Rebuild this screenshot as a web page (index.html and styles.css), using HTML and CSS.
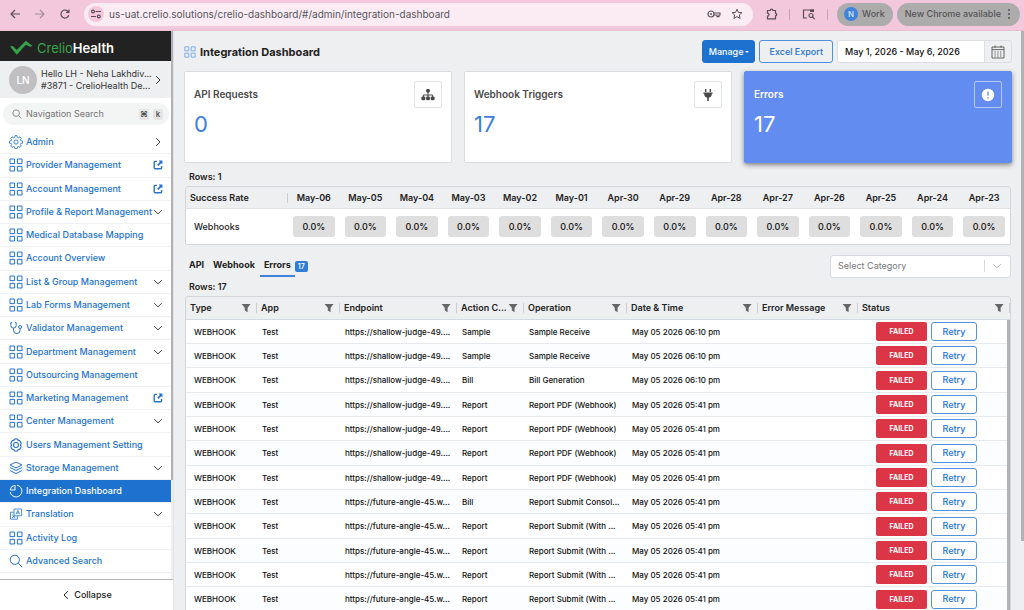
FILE: index.html
```html
<!DOCTYPE html>
<html lang="en">
<head>
<meta charset="utf-8">
<meta name="viewport" content="width=device-width, initial-scale=1">
<title>Integration Dashboard</title>
<link rel="stylesheet" href="styles.css">
</head>
<body>
<svg class="sprite" aria-hidden="true">
  <symbol id="i-grid" viewBox="0 0 14 14"><path d="M1 1h4.6v4.6H1zM8.4 1H13v4.6H8.4zM1 8.4h4.6V13H1zM8.4 8.4H13V13H8.4z" fill="none" stroke="currentColor"/></symbol>
  <symbol id="i-right" viewBox="0 0 10 10"><path d="M3.2 1.2 7 5 3.2 8.8" fill="none" stroke="currentColor"/></symbol>
  <symbol id="i-left" viewBox="0 0 10 10"><path d="M6.8 1.2 3 5l3.8 3.8" fill="none" stroke="currentColor"/></symbol>
  <symbol id="i-down" viewBox="0 0 10 10"><path d="M1.2 3.2 5 6.8l3.8-3.6" fill="none" stroke="currentColor"/></symbol>
  <symbol id="i-open" viewBox="0 0 10 10"><path d="M4 1.4H2.2a1 1 0 0 0-1 1v5.4a1 1 0 0 0 1 1h5.4a1 1 0 0 0 1-1V6" fill="none" stroke="currentColor" stroke-width="1.4"/><path d="M5.6.6h3.8v3.8L8.200 3.200 5.400 6 4.200 4.800 6.900 2z" fill="currentColor"/></symbol>
  <symbol id="i-gear" viewBox="0 0 24 24"><path d="M10.300 1.500h3.400l.6 2.900 1.900.8 2.500-1.600 2.400 2.400-1.600 2.500.8 1.900 2.900.6v3.400l-2.900.6-.8 1.900 1.600 2.500-2.400 2.400-2.500-1.600-1.900.8-.6 2.900h-3.400l-.6-2.900-1.900-.8-2.500 1.600-2.400-2.400 1.600-2.500-.8-1.900-2.900-.6V11l2.900-.6.8-1.900L2.900 6l2.400-2.400 2.500 1.600 1.900-.8z" transform="translate(0 -.4)" fill="none" stroke="currentColor" stroke-width="1.500" stroke-linejoin="round"/><circle cx="12" cy="12" r="3.600" fill="none" stroke="currentColor" stroke-width="1.500"/></symbol>
  <symbol id="i-cog" viewBox="0 0 24 24"><path d="M9 2.200q3-1.400 6 0l.7 2 2.100.2q2.700 1.900 3 5.200L19.600 12l1.200 2.400q-.3 3.300-3 5.200l-2.100.2-.7 2q-3 1.400-6 0l-.7-2-2.100-.2q-2.700-1.900-3-5.200L4.400 12 3.200 9.600q.3-3.300 3-5.200l2.100-.2z" fill="none" stroke="currentColor" stroke-width="1.900" stroke-linejoin="round"/><circle cx="12" cy="12" r="4.200" fill="none" stroke="currentColor" stroke-width="1.900"/></symbol>
  <symbol id="i-steth" viewBox="0 0 14 14"><path d="M3.200 1.600H1.800v2.800a2.700 2.700 0 0 0 5.400 0V1.600H5.800M4.500 7.200v2.100a3.300 3.300 0 0 0 6.600 0V7.600" fill="none" stroke="currentColor"/><circle cx="11.100" cy="6" r="1.500" fill="none" stroke="currentColor"/></symbol>
  <symbol id="i-layers" viewBox="0 0 14 14"><path d="M7 1 13 4 7 7 1 4zM1 6.500l6 3 6-3M1 9.500l6 3 6-3" fill="none" stroke="currentColor" stroke-linejoin="round"/></symbol>
  <symbol id="i-pie" viewBox="0 0 14 14"><path d="M8 1.200A5.900 5.900 0 1 1 1.200 8M6 1.200A5.500 5.500 0 0 0 1.200 6H6z" fill="none" stroke="currentColor"/></symbol>
  <symbol id="i-translate" viewBox="0 0 14 14"><path d="M5 8.600V2h7.600v6.800H5zM4.800 5.200H1.500v7h7V9M7 7.200l1.800-3.800 1.800 3.800M7.700 6h2.200M3 8h1.500M3 10.800l3-2M4 9l2.200 2" fill="none" stroke="currentColor" stroke-width=".8"/></symbol>
  <symbol id="i-search" viewBox="0 0 14 14"><circle cx="5.800" cy="5.800" r="4.600" fill="none" stroke="currentColor"/><path d="m9.200 9.200 4 4" stroke="currentColor"/></symbol>
  <symbol id="i-filter" viewBox="0 0 10 10"><path d="M.6 1h9L6.600 4.800V9.200L3.800 7.500V4.800z" fill="currentColor"/></symbol>
</svg>

<header class="browser">
  <button class="bare" aria-label="Back"><svg class="ic12" viewBox="0 0 12 12"><path d="M11 6H2M6 2 2 6l4 4" fill="none" stroke="currentColor" stroke-width="1.200"/></svg></button>
  <button class="bare faded" aria-label="Forward"><svg class="ic12" viewBox="0 0 12 12"><path d="M1 6h9M6 2l4 4-4 4" fill="none" stroke="currentColor" stroke-width="1.200"/></svg></button>
  <button class="bare" aria-label="Reload"><svg class="ic12" viewBox="0 0 12 12"><path d="M9.800 7.200A4 4 0 1 1 9.300 3.800M10 1.500v3H7" fill="none" stroke="currentColor" stroke-width="1.200"/></svg></button>
  <div class="address">
    <button class="site" aria-label="Site information"><svg class="ic12" viewBox="0 0 12 12"><path d="M5.500 3.500H11M1 8.500h5" stroke="currentColor" stroke-width="1.200"/><circle cx="3" cy="3.500" r="1.400" fill="none" stroke="currentColor" stroke-width="1.200"/><circle cx="8.800" cy="8.500" r="1.400" fill="none" stroke="currentColor" stroke-width="1.200"/></svg></button>
    <input class="url" type="text" aria-label="Address" value="us-uat.crelio.solutions/crelio-dashboard/#/admin/integration-dashboard">
    <button class="bare" aria-label="Passwords"><svg class="key" viewBox="0 0 14 10"><circle cx="4" cy="5" r="3" fill="none" stroke="currentColor" stroke-width="1.200"/><circle cx="4" cy="5" r="1" fill="currentColor"/><path d="M6.800 4H13v2h-1v1.600h-2V6H6.800" fill="none" stroke="currentColor" stroke-width="1.100"/></svg></button>
    <button class="bare" aria-label="Bookmark"><svg class="ic12" viewBox="0 0 12 12"><path d="m6 1.200 1.400 3.200 3.500.3-2.600 2.300.8 3.400L6 8.600l-3.100 1.800.8-3.400L1.100 4.700l3.500-.3z" fill="none" stroke="currentColor"/></svg></button>
  </div>
  <button class="bare ext" aria-label="Extensions"><svg class="ic12" viewBox="0 0 12 12"><path d="M1.500 2.500h2.800a1.300 1.300 0 0 1 2.600 0h2.600v2.800a1.300 1.300 0 0 1 0 2.600v3h-8V8.200a1.500 1.500 0 0 0 0-3z" fill="none" stroke="currentColor" stroke-width="1.200"/></svg></button>
  <span class="tick"></span>
  <button class="bare lens" aria-label="Side search"><svg class="key" viewBox="0 0 14 12"><path d="M5 10H1.500V2h10v2" fill="none" stroke="currentColor" stroke-width="1.200"/><path d="M8 1.500h4V4H8z" fill="currentColor"/><circle cx="9" cy="7.500" r="2" fill="none" stroke="currentColor" stroke-width="1.200"/><path d="m10.500 9 2.200 2.200" stroke="currentColor" stroke-width="1.200"/></svg></button>
  <span class="tick"></span>
  <button class="profile"><span class="initial">N</span>Work</button>
  <button class="update">New Chrome available<svg class="dots" viewBox="0 0 4 12"><circle cx="2" cy="2" r="1" fill="currentColor"/><circle cx="2" cy="6" r="1" fill="currentColor"/><circle cx="2" cy="10" r="1" fill="currentColor"/></svg></button>
</header>

<div class="app">
  <aside class="sidebar">
    <div class="side-body">
      <div class="side-main">
        <div class="brand"><svg class="mark" viewBox="0 0 24 16"><path d="M0 6.500 3 6l4 4L16.500.5 23.500 6l-2.500.8-4.500-2.300L7 15z" fill="#35a24a"/></svg><span class="wordmark">Crelio<b>Health</b></span></div>
        <button class="user"><span class="avatar">LN</span><span class="who"><span class="line">Hello LH - Neha Lakhdiv...</span><span class="line">#3871 - CrelioHealth De...</span></span><svg class="ic10"><use href="#i-right"/></svg></button>
        <label class="navsearch"><svg class="ic10"><use href="#i-search"/></svg><input type="search" placeholder="Navigation Search" aria-label="Navigation Search"><kbd>⌘</kbd><kbd>k</kbd></label>
        <nav class="menu">
          <a href="#"><svg class="ic14"><use href="#i-gear"/></svg><span>Admin</span><svg class="ic10 arrow"><use href="#i-right"/></svg></a>
          <a href="#"><svg class="ic14"><use href="#i-grid"/></svg><span>Provider Management</span><svg class="ic10"><use href="#i-open"/></svg></a>
          <a href="#"><svg class="ic14"><use href="#i-grid"/></svg><span>Account Management</span><svg class="ic10"><use href="#i-open"/></svg></a>
          <a href="#"><svg class="ic14"><use href="#i-grid"/></svg><span>Profile &amp; Report Management</span><svg class="ic10 arrow"><use href="#i-down"/></svg></a>
          <a href="#"><svg class="ic14"><use href="#i-grid"/></svg><span>Medical Database Mapping</span></a>
          <a href="#"><svg class="ic14"><use href="#i-grid"/></svg><span>Account Overview</span></a>
          <a href="#"><svg class="ic14"><use href="#i-grid"/></svg><span>List &amp; Group Management</span><svg class="ic10 arrow"><use href="#i-down"/></svg></a>
          <a href="#"><svg class="ic14"><use href="#i-grid"/></svg><span>Lab Forms Management</span><svg class="ic10 arrow"><use href="#i-down"/></svg></a>
          <a href="#"><svg class="ic14"><use href="#i-steth"/></svg><span>Validator Management</span><svg class="ic10 arrow"><use href="#i-down"/></svg></a>
          <a href="#"><svg class="ic14"><use href="#i-grid"/></svg><span>Department Management</span><svg class="ic10 arrow"><use href="#i-down"/></svg></a>
          <a href="#"><svg class="ic14"><use href="#i-grid"/></svg><span>Outsourcing Management</span></a>
          <a href="#"><svg class="ic14"><use href="#i-grid"/></svg><span>Marketing Management</span><svg class="ic10"><use href="#i-open"/></svg></a>
          <a href="#"><svg class="ic14"><use href="#i-grid"/></svg><span>Center Management</span><svg class="ic10 arrow"><use href="#i-down"/></svg></a>
          <a href="#"><svg class="ic14"><use href="#i-cog"/></svg><span>Users Management Setting</span></a>
          <a href="#"><svg class="ic14"><use href="#i-layers"/></svg><span>Storage Management</span><svg class="ic10 arrow"><use href="#i-down"/></svg></a>
          <a href="#" class="active" aria-current="page"><svg class="ic14"><use href="#i-pie"/></svg><span>Integration Dashboard</span></a>
          <a href="#"><svg class="ic14"><use href="#i-translate"/></svg><span>Translation</span><svg class="ic10 arrow"><use href="#i-down"/></svg></a>
          <a href="#"><svg class="ic14"><use href="#i-grid"/></svg><span>Activity Log</span></a>
          <a href="#"><svg class="ic14"><use href="#i-search"/></svg><span>Advanced Search</span></a>
        </nav>
      </div>
      <div class="track side-track"><div class="thumb"></div></div>
    </div>
    <button class="collapse"><svg class="ic10"><use href="#i-left"/></svg>Collapse</button>
  </aside>

  <main class="content">
    <div class="titlebar">
      <svg class="ic12 title-icon"><use href="#i-grid"/></svg>
      <h1>Integration Dashboard</h1>
      <button class="btn primary">Manage<span class="caret"></span></button>
      <button class="btn outline">Excel Export</button>
      <div class="daterange">
        <input type="text" aria-label="Date range" value="May 1, 2026 - May 6, 2026">
        <button aria-label="Open calendar"><svg class="ic14" viewBox="0 0 14 14"><path d="M1 2h12v11H1zM1 4.600h12M4 .5v2.300M10 .5v2.300" fill="none" stroke="currentColor" stroke-width=".9"/><path d="M3.500 7h7M3.500 9h7M3.500 11h7" stroke="currentColor" stroke-dasharray="1.200 1.600"/></svg></button>
      </div>
    </div>

    <section class="cards">
      <article class="card"><div><h2>API Requests</h2><p>0</p></div><span class="badge-icon"><svg class="ic14" viewBox="0 0 14 14"><path d="M2.300 9V7h9.400v2M7 4v5" fill="none" stroke="currentColor"/><circle cx="7" cy="2.800" r="2" fill="currentColor"/><rect x=".4" y="8.400" width="3.900" height="3.900" rx="1.200" fill="currentColor"/><rect x="5.050" y="8.400" width="3.900" height="3.900" rx="1.200" fill="currentColor"/><rect x="9.700" y="8.400" width="3.900" height="3.900" rx="1.200" fill="currentColor"/></svg></span></article>
      <article class="card"><div><h2>Webhook Triggers</h2><p>17</p></div><span class="badge-icon"><svg class="ic14" viewBox="0 0 14 14"><path d="M4 1h1.400v3H4zM8.600 1H10v3H8.600zM2.400 4.500h9.200v1.300h-.8c0 2.200-1 3.600-3 4V13H6.200V9.800c-2-.4-3-1.800-3-4h-.8z" fill="currentColor"/></svg></span></article>
      <article class="card selected"><div><h2>Errors</h2><p>17</p></div><span class="badge-icon"><svg class="ic14" viewBox="0 0 14 14"><circle cx="7" cy="7" r="6.200" fill="currentColor"/><path d="M7 3.600v4.200M7 9v1.400" stroke="#628cef" stroke-width="1.300"/></svg></span></article>
    </section>

    <p class="rows">Rows: 1</p>
    <div class="frame">
      <table class="rates">
        <thead><tr><th scope="col">Success Rate</th><th scope="col">May-06</th><th scope="col">May-05</th><th scope="col">May-04</th><th scope="col">May-03</th><th scope="col">May-02</th><th scope="col">May-01</th><th scope="col">Apr-30</th><th scope="col">Apr-29</th><th scope="col">Apr-28</th><th scope="col">Apr-27</th><th scope="col">Apr-26</th><th scope="col">Apr-25</th><th scope="col">Apr-24</th><th scope="col">Apr-23</th></tr></thead>
        <tbody><tr><td>Webhooks</td><td><span>0.0%</span></td><td><span>0.0%</span></td><td><span>0.0%</span></td><td><span>0.0%</span></td><td><span>0.0%</span></td><td><span>0.0%</span></td><td><span>0.0%</span></td><td><span>0.0%</span></td><td><span>0.0%</span></td><td><span>0.0%</span></td><td><span>0.0%</span></td><td><span>0.0%</span></td><td><span>0.0%</span></td><td><span>0.0%</span></td></tr></tbody>
      </table>
    </div>

    <div class="tabbar">
      <div class="tabs" role="tablist">
        <button role="tab" aria-selected="false">API</button>
        <button role="tab" aria-selected="false">Webhook</button>
        <button role="tab" aria-selected="true">Errors</button>
      </div>
      <span class="count">17</span>
      <div class="category">
        <select aria-label="Select Category"><option>Select Category</option></select>
        <svg class="ic10"><use href="#i-down"/></svg>
      </div>
    </div>

    <p class="rows second">Rows: 17</p>
    <div class="frame log-frame">
      <table class="log">
        <colgroup><col class="c-type"><col class="c-app"><col class="c-end"><col class="c-act"><col class="c-op"><col class="c-date"><col class="c-err"><col class="c-stat"></colgroup>
        <thead><tr>
          <th scope="col"><div><span>Type</span><svg class="ic10"><use href="#i-filter"/></svg></div></th>
          <th scope="col"><div><span>App</span><svg class="ic10"><use href="#i-filter"/></svg></div></th>
          <th scope="col"><div><span>Endpoint</span><svg class="ic10"><use href="#i-filter"/></svg></div></th>
          <th scope="col"><div><span>Action C...</span><svg class="ic10"><use href="#i-filter"/></svg></div></th>
          <th scope="col"><div><span>Operation</span><svg class="ic10"><use href="#i-filter"/></svg></div></th>
          <th scope="col"><div><span>Date &amp; Time</span><svg class="ic10"><use href="#i-filter"/></svg></div></th>
          <th scope="col"><div><span>Error Message</span><svg class="ic10"><use href="#i-filter"/></svg></div></th>
          <th scope="col"><div><span>Status</span><svg class="ic10"><use href="#i-filter"/></svg></div></th>
        </tr></thead>
        <tbody>
          <tr><td>WEBHOOK</td><td>Test</td><td>https://shallow-judge-49....</td><td>Sample</td><td>Sample Receive</td><td>May 05 2026 06:10 pm</td><td></td><td><div class="state"><span class="failed">FAILED</span><button class="retry">Retry</button></div></td></tr>
          <tr><td>WEBHOOK</td><td>Test</td><td>https://shallow-judge-49....</td><td>Sample</td><td>Sample Receive</td><td>May 05 2026 06:10 pm</td><td></td><td><div class="state"><span class="failed">FAILED</span><button class="retry">Retry</button></div></td></tr>
          <tr><td>WEBHOOK</td><td>Test</td><td>https://shallow-judge-49....</td><td>Bill</td><td>Bill Generation</td><td>May 05 2026 06:10 pm</td><td></td><td><div class="state"><span class="failed">FAILED</span><button class="retry">Retry</button></div></td></tr>
          <tr><td>WEBHOOK</td><td>Test</td><td>https://shallow-judge-49....</td><td>Report</td><td>Report PDF (Webhook)</td><td>May 05 2026 05:41 pm</td><td></td><td><div class="state"><span class="failed">FAILED</span><button class="retry">Retry</button></div></td></tr>
          <tr><td>WEBHOOK</td><td>Test</td><td>https://shallow-judge-49....</td><td>Report</td><td>Report PDF (Webhook)</td><td>May 05 2026 05:41 pm</td><td></td><td><div class="state"><span class="failed">FAILED</span><button class="retry">Retry</button></div></td></tr>
          <tr><td>WEBHOOK</td><td>Test</td><td>https://shallow-judge-49....</td><td>Report</td><td>Report PDF (Webhook)</td><td>May 05 2026 05:41 pm</td><td></td><td><div class="state"><span class="failed">FAILED</span><button class="retry">Retry</button></div></td></tr>
          <tr><td>WEBHOOK</td><td>Test</td><td>https://shallow-judge-49....</td><td>Report</td><td>Report PDF (Webhook)</td><td>May 05 2026 05:41 pm</td><td></td><td><div class="state"><span class="failed">FAILED</span><button class="retry">Retry</button></div></td></tr>
          <tr><td>WEBHOOK</td><td>Test</td><td>https://future-angle-45.w...</td><td>Bill</td><td>Report Submit Consol...</td><td>May 05 2026 05:41 pm</td><td></td><td><div class="state"><span class="failed">FAILED</span><button class="retry">Retry</button></div></td></tr>
          <tr><td>WEBHOOK</td><td>Test</td><td>https://future-angle-45.w...</td><td>Report</td><td>Report Submit (With ...</td><td>May 05 2026 05:41 pm</td><td></td><td><div class="state"><span class="failed">FAILED</span><button class="retry">Retry</button></div></td></tr>
          <tr><td>WEBHOOK</td><td>Test</td><td>https://future-angle-45.w...</td><td>Report</td><td>Report Submit (With ...</td><td>May 05 2026 05:41 pm</td><td></td><td><div class="state"><span class="failed">FAILED</span><button class="retry">Retry</button></div></td></tr>
          <tr><td>WEBHOOK</td><td>Test</td><td>https://future-angle-45.w...</td><td>Report</td><td>Report Submit (With ...</td><td>May 05 2026 05:41 pm</td><td></td><td><div class="state"><span class="failed">FAILED</span><button class="retry">Retry</button></div></td></tr>
          <tr><td>WEBHOOK</td><td>Test</td><td>https://future-angle-45.w...</td><td>Report</td><td>Report Submit (With ...</td><td>May 05 2026 05:41 pm</td><td></td><td><div class="state"><span class="failed">FAILED</span><button class="retry">Retry</button></div></td></tr>
        </tbody>
      </table>
      <div class="track log-track"><div class="thumb"></div></div>
    </div>
  </main>
  <div class="track page-track"><div class="thumb"></div></div>
</div>
</body>
</html>
```
FILE: styles.css
```css
* { box-sizing: border-box; }
body {
  margin: 0; height: 100vh; overflow: hidden; display: flex; flex-direction: column;
  font: 500 9px/12px Inter, "Liberation Sans", sans-serif; color: #222; background: #eeeff1;
}
button, input, select { font: inherit; color: inherit; margin: 0; padding: 0; border: 0; background: none; min-width: 0; }
h1, h2, p { margin: 0; }
svg { display: block; flex: none; }
.sprite { position: absolute; width: 0; height: 0; }
.ic10 { width: 10px; height: 10px; }
.ic12 { width: 12px; height: 12px; }
.ic14 { width: 14px; height: 14px; }

/* Browser toolbar */
.browser { flex: none; height: 31px; display: flex; align-items: center; padding: 0 4px 2px 9px; background: #f4c8dc; color: #5a4f56; border-bottom: 1px solid #e6bfd0; }
.bare { display: flex; margin-right: 13px; }
.faded { opacity: .5; }
.address { flex: 1; height: 23px; display: flex; align-items: center; border-radius: 12px; background: #fbecf4; padding: 0 10px 0 4px; }
.site { width: 16px; height: 16px; border-radius: 8px; background: #f4c8dc; display: flex; align-items: center; justify-content: center; }
.url { flex: 1; padding-left: 5px; font-size: 10px; font-weight: 400; color: #55555a; }
.key { width: 14px; height: 12px; }
.address .bare { margin: 0 0 0 10px; }
.bare.ext { margin: 0 11px 0 13px; }
.bare.lens { margin: 0 11px 0 12px; }
.tick { width: 1px; height: 11px; background: #c9a2b5; }
.profile, .update { height: 23px; border-radius: 12px; background: #adacad; color: #555; display: flex; align-items: center; font-size: 9px; }
.profile { margin: 0 4px 0 9px; padding: 0 8px 0 7px; gap: 4px; }
.initial { width: 14px; height: 14px; line-height: 14px; border-radius: 7px; background: #3f83dc; color: #dbe8fa; font-size: 8px; text-align: center; }
.update { padding: 0 9px 0 8px; gap: 6px; }
.dots { width: 4px; height: 12px; }

/* Shell */
.app { flex: 1; min-height: 0; display: grid; grid-template-columns: 174px minmax(0, 1fr) 3px; }
.track { background: #eeeff1; }
.thumb { background: #b2b2b4; }
.page-track .thumb { height: 88%; }

/* Sidebar */
.sidebar { display: flex; flex-direction: column; background: #fff; min-height: 0; border-right: 1px solid #e2e2e4; }
.side-body { flex: 1; min-height: 0; display: flex; }
.side-main { flex: 1; min-width: 0; display: flex; flex-direction: column; padding-bottom: 6px; }
.side-track { width: 2px; }
.side-track .thumb { height: 82%; }
.brand { height: 30px; flex: none; background: #222; display: flex; align-items: center; gap: 4px; padding: 3px 0 0 10px; }
.mark { width: 23px; height: 16px; }
.wordmark { font-size: 13px; line-height: 18px; font-weight: 400; color: #3aa54d; }
.wordmark b { font-weight: 600; color: #fff; }
.user { flex: none; height: 37px; display: flex; align-items: center; padding: 0 8px 0 9px; background: #eeeff1; text-align: left; color: #333; }
.avatar { width: 28px; height: 28px; line-height: 28px; border-radius: 14px; background: #c0c0c2; color: #fff; text-align: center; font-size: 10px; }
.who { flex: 1; min-width: 0; padding-left: 4px; }
.line { display: block; white-space: nowrap; font-weight: 400; }
.navsearch { flex: none; height: 22px; margin: 5px 2px 6px 3px; padding: 0 6px 0 9px; border-radius: 12px; background: #f3f4f4; display: flex; align-items: center; color: #666; }
.navsearch input { flex: 1; padding-left: 4px; font-weight: 400; outline: 0; }
.navsearch input::placeholder { color: #757575; opacity: 1; }
.navsearch kbd { width: 10px; height: 11px; margin-left: 4px; border-radius: 2px; background: #e5e5e6; font: 500 8px/11px Inter, "DejaVu Sans", sans-serif; text-align: center; color: #444; }
.menu { flex: 1; display: flex; flex-direction: column; }
.menu a { flex: 1; display: flex; align-items: center; gap: 3px; padding: 0 8px 0 9px; border-bottom: 1px solid #f0f1f2; color: #2472cf; text-decoration: none; white-space: nowrap; }
.menu span { flex: 1; min-width: 0; }
.menu .arrow { color: #444; }
.menu .active { background: #1d72d0; color: #fff; }
.collapse { flex: none; height: 31px; border-top: 1px solid #b5b5b7; display: flex; align-items: center; justify-content: center; gap: 3px; color: #222; }

/* Content */
.content { min-width: 0; min-height: 0; display: flex; flex-direction: column; padding: 9px 9px 0 10px; }
.titlebar { flex: none; height: 23px; display: flex; align-items: center; margin-bottom: 8px; }
.title-icon { color: #6fa3e8; }
h1 { flex: 1; padding-left: 4px; font-size: 11px; line-height: 16px; font-weight: 700; }
.btn { height: 23px; border-radius: 3px; display: flex; align-items: center; border: 1px solid #1d72d0; }
.primary { background: #1d72d0; color: #fff; padding: 0 5px 0 6px; gap: 2px; margin-right: 4px; }
.caret { border: 2px solid transparent; border-top-color: #fff; border-bottom: 0; }
.outline { color: #2472cf; border-color: #4d8fdd; padding: 0 9px; margin-right: 4px; }
.daterange { flex: 0 1 175px; height: 23px; display: flex; border: 1px solid #dcdee2; border-radius: 3px; overflow: hidden; }
.daterange input { flex: 1; background: #fff; padding-left: 7px; color: #111; }
.daterange button { width: 27px; display: flex; align-items: center; justify-content: center; color: #555; border-left: 1px solid #dcdee2; }

.cards { flex: none; display: grid; grid-template-columns: repeat(3, minmax(0, 1fr)); gap: 12px; }
.card { min-height: 92px; display: flex; justify-content: space-between; align-items: flex-start; padding: 9px; background: #fff; border: 1px solid #dbdcdf; border-radius: 2px; }
.card h2 { margin-top: 6px; font-size: 10px; line-height: 14px; font-weight: 600; color: #4a4a4a; }
.card p { margin-top: 10px; font-size: 22px; line-height: 26px; font-weight: 400; color: #3b80dc; }
.badge-icon { width: 28px; height: 27px; border: 1px solid #e2e3e5; border-radius: 2px; display: flex; align-items: center; justify-content: center; color: #4a4a4a; }
.selected { background: #628cef; border-color: #628cef; box-shadow: 0 2px 5px #00000073; }
.selected h2, .selected p, .selected .badge-icon { color: #fff; }
.selected .badge-icon { border-color: #b4c8f8; }

.rows { flex: none; padding: 8px 0 3px 5px; font-weight: 600; color: #222; }
.second { padding-top: 0; }
.frame { flex: none; margin: 0 1px; border: 1px solid #d3d5d9; border-radius: 4px 4px 2px 2px; overflow: hidden; }
table { width: 100%; table-layout: fixed; border-collapse: separate; border-spacing: 0; }
th, td { padding: 0; text-align: left; white-space: nowrap; }
th { font-weight: 600; background: #eeeff1; }
.rates th { height: 22px; text-align: center; border-bottom: 1px solid #dfe1e4; }
.rates th:first-child { width: 102px; text-align: left; padding-left: 4px; background: linear-gradient(#ccced2, #ccced2) right center / 1px 10px no-repeat #eeeff1; }
.rates td { height: 35px; background: #fff; text-align: center; }
.rates td:first-child { text-align: left; padding-left: 8px; }
.rates td span { display: block; height: 21px; line-height: 21px; margin: 0 5px; border-radius: 3px; background: #dedede; color: #111; }

.tabbar { flex: none; height: 30px; display: flex; align-items: center; padding: 0 1px; margin-top: 6px; }
.tabs { display: flex; gap: 1px; }
.tabs button { height: 22px; padding: 0 4px; font-weight: 700; border-bottom: 2px solid transparent; }
.tabs button[aria-selected="true"] { border-color: #3f83dc; }
.count { height: 11px; line-height: 11px; padding: 0 3px; border-radius: 2px; background: #2f7dd6; color: #fff; font-size: 7px; font-weight: 600; }
.category { flex: 0 1 181px; height: 23px; margin-left: auto; display: flex; align-items: center; background: #fff; border: 1px solid #d5dae1; border-radius: 3px; padding-right: 8px; color: #b5b9be; }
.category select { flex: 1; appearance: none; padding-left: 7px; color: #777; font-weight: 400; border-right: 1px solid #d5dae1; margin-right: 7px; }

.log-frame { position: relative; border-bottom: 0; }
.c-type { width: 71px; } .c-app { width: 83px; } .c-end { width: 117px; } .c-act { width: 67px; }
.c-op { width: 103px; } .c-date { width: 131px; } .c-err { width: 100px; } .c-stat { width: 152px; }
.log th { height: 23px; border-bottom: 1px solid #d3dae3; }
.log th div { height: 10px; display: flex; align-items: center; padding: 0 5px 0 4px; border-right: 1px solid #ccced2; color: #222; }
.log th span { flex: 1; }
.log th svg { color: #666; }
.log td { height: 24px; padding-left: 5px; background: #fff; border-bottom: 1px solid #e6e9ed; font-size: 8px; color: #111; }
.log tr:nth-child(3n) td { height: 25px; }
.log td:first-child { padding-left: 8px; }
.log tr:nth-child(even) td { background: #fcfdfe; }
.state { display: flex; align-items: center; gap: 4px; padding-left: 13px; }
.failed { width: 51px; height: 19px; line-height: 19px; border-radius: 2px; background: #dc3545; color: #fff; font-size: 7px; font-weight: 700; text-align: center; }
.retry { width: 46px; height: 19px; border: 1px solid #5393de; border-radius: 3px; background: #fff; color: #2472cf; font-size: 9px; }
.log-track { position: absolute; top: 23px; right: 0; bottom: 0; width: 3px; }
.log-track .thumb { height: 100%; }
```
